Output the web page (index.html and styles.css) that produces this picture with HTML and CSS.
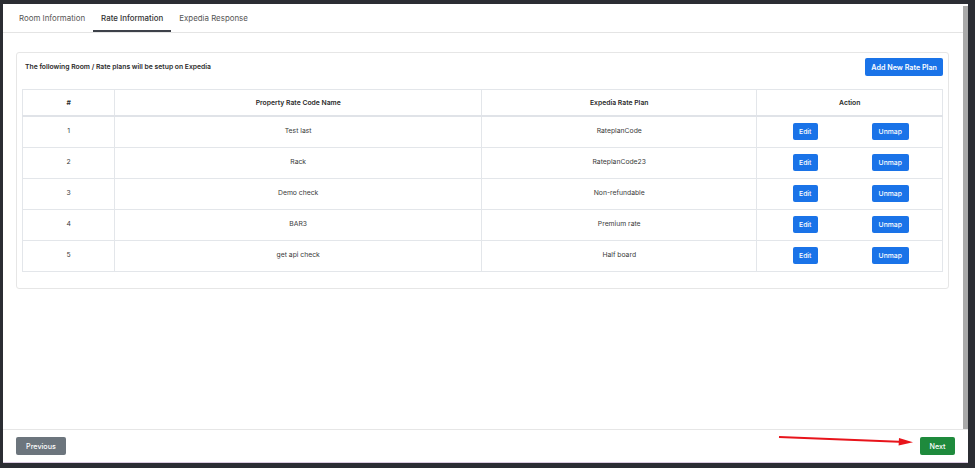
FILE: index.html
```html
<!DOCTYPE html>
<html lang="en">
<head>
  <meta charset="UTF-8">
  <meta name="viewport" content="width=device-width, initial-scale=1.0">
  <title>Rate Information</title>
  <link rel="stylesheet" href="styles.css">
</head>
<body>
  <div class="frame">
    <div class="top-strip"></div>
    <div class="panel">
      <div class="main">
        <div class="content">
          <div class="tabs">
            <div class="tab">Room Information</div>
            <div class="tab active">Rate Information</div>
            <div class="tab">Expedia Response</div>
          </div>
          <div class="card">
            <div class="card-head">
              <span class="card-title">The following Room / Rate plans will be setup on Expedia</span>
              <button class="btn btn-blue btn-add">Add New Rate Plan</button>
            </div>
            <table class="rates">
              <thead>
                <tr>
                  <th class="c-num">#</th>
                  <th class="c-name">Property Rate Code Name</th>
                  <th class="c-plan">Expedia Rate Plan</th>
                  <th class="c-act">Action</th>
                </tr>
              </thead>
              <tbody>
                <tr>
                  <td>1</td><td>Test last</td><td>RateplanCode</td>
                  <td><div class="actions"><button class="btn btn-blue">Edit</button><button class="btn btn-blue">Unmap</button></div></td>
                </tr>
                <tr>
                  <td>2</td><td>Rack</td><td>RateplanCode23</td>
                  <td><div class="actions"><button class="btn btn-blue">Edit</button><button class="btn btn-blue">Unmap</button></div></td>
                </tr>
                <tr>
                  <td>3</td><td>Demo check</td><td>Non-refundable</td>
                  <td><div class="actions"><button class="btn btn-blue">Edit</button><button class="btn btn-blue">Unmap</button></div></td>
                </tr>
                <tr>
                  <td>4</td><td>BAR3</td><td>Premium rate</td>
                  <td><div class="actions"><button class="btn btn-blue">Edit</button><button class="btn btn-blue">Unmap</button></div></td>
                </tr>
                <tr>
                  <td>5</td><td>get api check</td><td>Half board</td>
                  <td><div class="actions"><button class="btn btn-blue">Edit</button><button class="btn btn-blue">Unmap</button></div></td>
                </tr>
              </tbody>
            </table>
          </div>
        </div>
        <div class="scrollbar"></div>
      </div>
      <div class="footer">
        <button class="btn btn-grey">Previous</button>
        <button class="btn btn-green">Next</button>
        <svg class="arrow" width="140" height="14" viewBox="0 0 140 14">
          <path d="M2 3 L128 8" stroke="#e8141b" stroke-width="2" fill="none"/>
          <path d="M122 4 L136 8.3 L121.6 11.5 Z" fill="#e8141b"/>
        </svg>
      </div>
    </div>
  </div>
</body>
</html>
```

FILE: styles.css
```css
body {
  margin: 0;
  padding: 0;
  background: #2b2d33;
  font-family: Inter, "Noto Sans", sans-serif;
  color: #333;
}

.frame {
  width: 975px;
  height: 468px;
  display: flex;
  flex-direction: column;
}

.top-strip {
  height: 4px;
}

.panel {
  margin-left: 3px;
  width: 965px;
  height: 459px;
  background: #fff;
  display: flex;
  flex-direction: column;
  border-bottom: 1px solid #d9c9e0;
  box-sizing: border-box;
}

.main {
  flex: 1;
  display: flex;
}

.content {
  flex: 1;
}

.scrollbar {
  width: 5px;
  margin-top: 2px;
  background: #a9a9a9;
}

.tabs {
  display: flex;
  height: 29px;
  padding-left: 8px;
  border-bottom: 1px solid #e4e4e4;
  box-sizing: border-box;
}

.tab {
  padding: 0 8px;
  font-size: 7.9px;
  color: #555;
  line-height: 28px;
  border-bottom: 2px solid transparent;
}

.tab.active {
  color: #333;
  font-weight: 500;
  border-bottom-color: #3d4149;
}

.card {
  margin: 19px 14px 0 13px;
  border: 1px solid #e6e6e6;
  border-radius: 3px;
  padding: 5px 5px 16px 5px;
}

.card-head {
  display: flex;
  justify-content: space-between;
  align-items: flex-start;
  margin-bottom: 13px;
}

.card-title {
  font-size: 6.8px;
  font-weight: 600;
  color: #2a2a2a;
  padding: 4px 0 0 3px;
}

.btn {
  border: none;
  border-radius: 2px;
  color: #fff;
  font-family: Inter, "Noto Sans", sans-serif;
  cursor: pointer;
  padding: 0;
}

.btn-blue {
  background: #1a73e8;
  font-size: 6.8px;
  font-weight: 500;
  height: 17px;
  padding: 0 6px;
}

.btn-add {
  height: 18px;
  padding: 0 6px;
  font-size: 7.2px;
  font-weight: 600;
}

.rates {
  width: 921px;
  border-collapse: collapse;
  font-size: 6.8px;
}

.rates th,
.rates td {
  border: 1px solid #e3e6ea;
  text-align: center;
  padding: 0;
}

.rates th {
  height: 25px;
  font-weight: 600;
  color: #2a2a2a;
  border-bottom: 2px solid #e0e3e8;
}

.rates td {
  height: 31px;
  color: #3a3a3a;
  vertical-align: top;
  padding-top: 9px;
  box-sizing: border-box;
}

.rates td:last-child {
  vertical-align: middle;
  padding-top: 0;
}

.c-num { width: 92px; }
.c-name { width: 368px; }
.c-plan { width: 276px; }
.c-act { width: 185px; }

.actions {
  display: flex;
  justify-content: center;
  gap: 54px;
  padding-left: 2px;
}

.actions .btn:first-child {
  width: 25px;
  padding: 0;
}

.actions .btn:last-child {
  width: 37px;
  padding: 0;
}

.footer {
  position: relative;
  height: 33px;
  border-top: 1px solid #e6e6e6;
  box-sizing: border-box;
  display: flex;
  justify-content: space-between;
  align-items: center;
  padding: 0 13px 0 13px;
}

.btn-grey {
  background: #6c757d;
  width: 50px;
  height: 18px;
  font-size: 7.2px;
  font-weight: 500;
}

.btn-green {
  background: #1e8a3c;
  width: 35px;
  height: 18px;
  font-size: 7.2px;
  font-weight: 500;
}

.arrow {
  position: absolute;
  left: 774px;
  top: 4px;
}
```
